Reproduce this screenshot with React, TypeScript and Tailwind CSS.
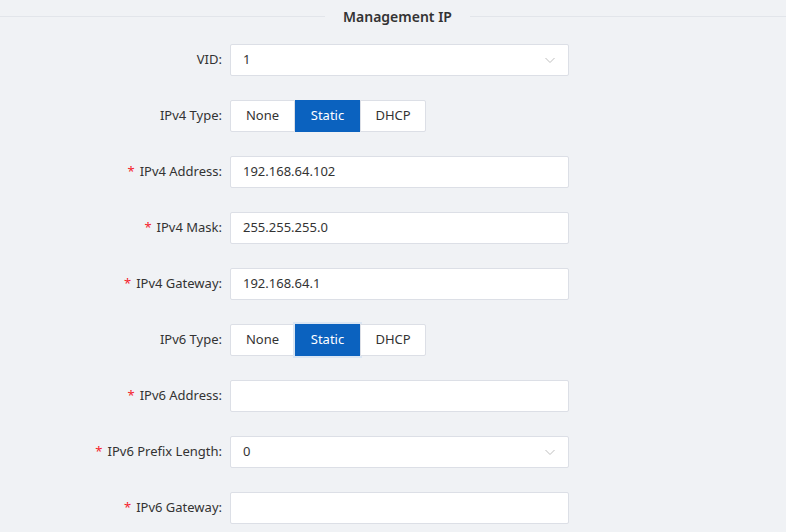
import React from "react";

const Chevron = () => (
  <svg width="12" height="12" viewBox="0 0 12 12" className="text-[#bfbfbf]">
    <path d="M1.5 4 L6 8.5 L10.5 4" fill="none" stroke="currentColor" strokeWidth="1" />
  </svg>
);

function Row({ label, req, children }: { label: string; req?: boolean; children: React.ReactNode }) {
  return (
    <div className="flex items-center h-[32px]">
      <div className="w-[230px] pr-[8px] text-right text-[13px] text-[#333]">
        {req && <span className="text-[#f5222d] mr-[5px]">*</span>}
        {label}:
      </div>
      {children}
    </div>
  );
}

const Input = ({ value, select }: { value?: string; select?: boolean }) => (
  <div className="w-[339px] h-[32px] bg-white border border-[#dcdfe6] rounded-[2px] flex items-center justify-between px-[12px] text-[13px] text-[#333]">
    <span>{value}</span>
    {select && <Chevron />}
  </div>
);

const Seg = ({ halo }: { halo?: boolean }) => (
  <div className="flex h-[32px] text-[13px] text-[#333]">
    <div className="w-[65px] bg-white border border-[#dcdfe6] flex items-center justify-center rounded-l-[2px]">None</div>
    <div className={`w-[65px] bg-[#0b62bf] text-white flex items-center justify-center ${halo ? "shadow-[0_0_0_2px_#dbe6f3]" : ""}`}>Static</div>
    <div className="w-[66px] bg-white border border-[#dcdfe6] flex items-center justify-center rounded-r-[2px]">DHCP</div>
  </div>
);

export default function App() {
  return (
    <div className="w-[786px] h-[532px] bg-[#f0f2f5] overflow-hidden" style={{ fontFamily: '"Noto Sans", "Open Sans", sans-serif' }}>
      <div className="flex items-center h-[32px]">
        <div className="w-[325px] h-px bg-[#e2e5ea]" />
        <div className="w-[145px] text-center text-[14px] font-semibold text-[#333]">Management IP</div>
        <div className="flex-1 h-px bg-[#e2e5ea]" />
      </div>
      <div className="flex flex-col gap-[24px] mt-[12px]">
        <Row label="VID"><Input value="1" select /></Row>
        <Row label="IPv4 Type"><Seg /></Row>
        <Row label="IPv4 Address" req><Input value="192.168.64.102" /></Row>
        <Row label="IPv4 Mask" req><Input value="255.255.255.0" /></Row>
        <Row label="IPv4 Gateway" req><Input value="192.168.64.1" /></Row>
        <Row label="IPv6 Type"><Seg halo /></Row>
        <Row label="IPv6 Address" req><Input /></Row>
        <Row label="IPv6 Prefix Length" req><Input value="0" select /></Row>
        <Row label="IPv6 Gateway" req><Input /></Row>
      </div>
    </div>
  );
}
